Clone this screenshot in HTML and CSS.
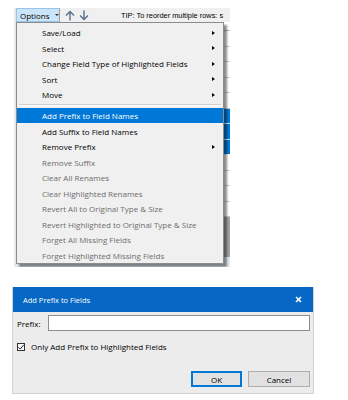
FILE: index.html
```html
<!DOCTYPE html>
<html lang="en">
  <head>
    <meta charset="UTF-8" />
    <meta name="viewport" content="width=device-width, initial-scale=1.0" />
    <title>Add Prefix</title>
    <link rel="stylesheet" href="styles.css">
  </head>
  <body>
    <div class="shot">
      <div class="toolbar">
        <div class="options-btn">
          <span>Options</span>
          <span class="caret"></span>
        </div>
        <svg class="arrow" width="10" height="11" viewBox="0 0 10 11">
          <path d="M5 10.5V1.5M1 5.5L5 1.5L9 5.5" fill="none" stroke="#56708c" stroke-width="1.4" />
        </svg>
        <svg class="arrow" width="10" height="11" viewBox="0 0 10 11">
          <path d="M5 0.5V9.5M1 5.5L5 9.5L9 5.5" fill="none" stroke="#56708c" stroke-width="1.4" />
        </svg>
        <span class="tip">TIP: To reorder multiple rows: s</span>
      </div>

      <div class="list">
        <div class="list-head"></div>
        <div class="row"></div>
        <div class="row"></div>
        <div class="row"></div>
        <div class="row"></div>
        <div class="row"></div>
        <div class="row selected"></div>
        <div class="row selected"></div>
        <div class="row selected"></div>
        <div class="row"></div>
        <div class="row"></div>
        <div class="row"></div>
        <div class="row"></div>
        <div class="list-empty"></div>
      </div>

      <ul class="menu">
        <li class="item">Save/Load <span class="sub"></span></li>
        <li class="item">Select <span class="sub"></span></li>
        <li class="item">Change Field Type of Highlighted Fields <span class="sub"></span></li>
        <li class="item">Sort <span class="sub"></span></li>
        <li class="item">Move <span class="sub"></span></li>
        <li class="sep"></li>
        <li class="item active">Add Prefix to Field Names</li>
        <li class="item">Add Suffix to Field Names</li>
        <li class="item">Remove Prefix <span class="sub"></span></li>
        <li class="item disabled">Remove Suffix</li>
        <li class="item disabled">Clear All Renames</li>
        <li class="item disabled">Clear Highlighted Renames</li>
        <li class="item disabled">Revert All to Original Type &amp; Size</li>
        <li class="item disabled">Revert Highlighted to Original Type &amp; Size</li>
        <li class="item disabled">Forget All Missing Fields</li>
        <li class="item disabled">Forget Highlighted Missing Fields</li>
      </ul>
    </div>

    <div class="dialog">
      <div class="title-bar">
        <span>Add Prefix to Fields</span>
        <svg class="close" width="7" height="7" viewBox="0 0 7 7">
          <path d="M1 1L6 6M6 1L1 6" stroke="#fff" stroke-width="1.6" />
        </svg>
      </div>
      <div class="dialog-body">
        <div class="field">
          <label for="prefix">Prefix:</label>
          <input type="text" id="prefix" name="prefix" />
        </div>
        <div class="check">
          <span class="box">
            <svg width="8" height="8" viewBox="0 0 8 8">
              <path d="M1.3 4.2L3.2 6L6.8 1.8" fill="none" stroke="#222" stroke-width="1" />
            </svg>
          </span>
          <span>Only Add Prefix to Highlighted Fields</span>
        </div>
        <div class="buttons">
          <button class="btn ok">OK</button>
          <button class="btn">Cancel</button>
        </div>
      </div>
    </div>
  </body>
</html>
```

FILE: styles.css
```css
body {
  margin: 0;
  padding: 0;
  background-color: white;
  font-family: 'Open Sans', 'Noto Sans', sans-serif;
  font-size: 8px;
  color: #000;
}

.shot {
  position: relative;
  width: 216px;
  height: 259px;
  margin: 8px 0 0 14px;
  overflow: hidden;
  background-color: #e4e9f0;
}

.toolbar {
  height: 14px;
  margin-left: 2px;
  display: flex;
  align-items: center;
  background-color: #f0f0f0;
}

.options-btn {
  flex: none;
  width: 44px;
  height: 14px;
  box-sizing: border-box;
  padding-left: 3px;
  display: flex;
  align-items: center;
  background-color: #cce4f7;
  border: 1px solid #99c4e8;
  border-right-color: #a0a0a0;
}

.caret {
  width: 0;
  height: 0;
  margin-left: 5px;
  border-left: 2px solid transparent;
  border-right: 2px solid transparent;
  border-top: 2px solid #333;
}

.arrow {
  flex: none;
  margin-left: 5px;
}

.arrow + .arrow {
  margin-left: 4px;
}

.tip {
  margin-left: 32px;
  font-family: 'Liberation Sans', Arial, sans-serif;
  font-size: 7.4px;
  white-space: nowrap;
}

.list {
  margin-left: 2px;
  background-color: white;
  border-left: 1px solid #c8d0da;
}

.list-head {
  height: 8px;
  border-bottom: 1px solid #bdbdbd;
}

.row {
  height: 14.5px;
  border-bottom: 1px solid #cfcfcf;
}

.row.selected {
  background-color: #0078d7;
  border-bottom-color: #e6f0fa;
}

.list-empty {
  height: 40px;
  background-color: #a3a3a3;
}

.menu {
  position: absolute;
  left: 2px;
  top: 14px;
  width: 208px;
  margin: 0;
  padding: 2px 0 0;
  box-sizing: border-box;
  list-style: none;
  background-color: #f0f0f0;
  border: 1px solid #8c8c8c;
  box-shadow: 3px 3px 2px rgba(0, 0, 0, 0.45);
}

.item {
  height: 15.56px;
  padding: 0 8px 0 25px;
  display: flex;
  align-items: center;
  justify-content: space-between;
  white-space: nowrap;
}

.item.active {
  background-color: #0078d7;
  color: white;
}

.item.disabled {
  color: #6d6d6d;
}

.sub {
  width: 0;
  height: 0;
  border-left: 3px solid #000;
  border-top: 2.5px solid transparent;
  border-bottom: 2.5px solid transparent;
}

.sep {
  height: 1px;
  margin: 1px 2px 2px 2px;
  background-color: #cfcfcf;
  border-bottom: 1px solid white;
}

.dialog {
  width: 302px;
  margin: 20px 0 0 12px;
  box-sizing: border-box;
  background-color: #ececec;
  border: 1px solid #d4d4d4;
  border-top: none;
}

.title-bar {
  height: 25px;
  padding: 0 11px 0 10px;
  display: flex;
  align-items: center;
  justify-content: space-between;
  background-color: #0667c4;
  color: white;
  font-size: 7.5px;
}

.dialog-body {
  padding: 3px 3px 6px 4px;
}

.field {
  display: flex;
  align-items: center;
}

.field label {
  width: 31px;
}

.field input {
  flex: 1;
  height: 16px;
  margin: 0;
  padding: 0 3px;
  box-sizing: border-box;
  border: 1px solid #8f8f8f;
  background-color: white;
  font: inherit;
}

.check {
  margin-top: 10px;
  display: flex;
  align-items: center;
}

.box {
  width: 8px;
  height: 8px;
  margin-right: 6px;
  box-sizing: border-box;
  border: 1px solid #333;
  background-color: white;
  display: flex;
  align-items: center;
  justify-content: center;
}

.box svg {
  flex: none;
}

.buttons {
  margin-top: 19px;
  display: flex;
  justify-content: flex-end;
  gap: 6px;
}

.btn {
  width: 51px;
  height: 16px;
  padding: 0;
  box-sizing: border-box;
  background-color: #e1e1e1;
  border: 1px solid #adadad;
  font: inherit;
  color: #000;
}

.btn + .btn {
  width: 62px;
}

.btn.ok {
  border: 1px solid #0078d7;
  box-shadow: inset 0 0 0 1px #0078d7;
}
```
